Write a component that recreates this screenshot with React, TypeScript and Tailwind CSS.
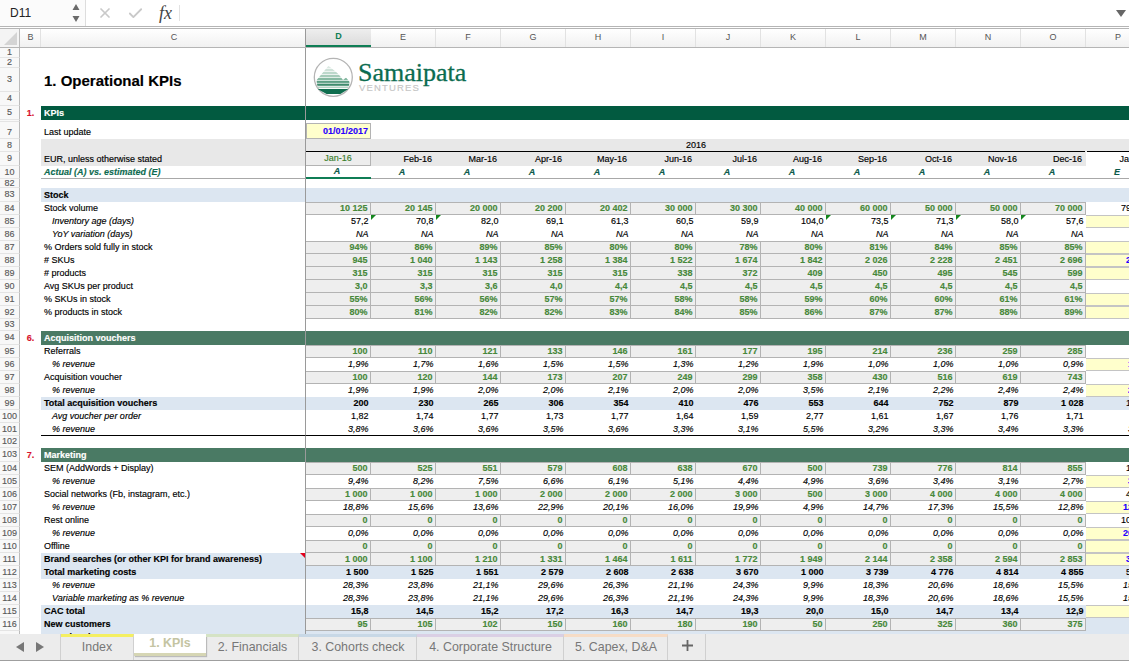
import type { ReactNode } from "react";
import { Check, X } from "lucide-react";

type Cell = "input" | "num" | "pct" | "total";
type Label = "plain" | "indent" | "bold";
type Side = { bg: "yellow" | "white" | "blue"; text?: string; style?: "ink" | "ital" | "bold" };

interface DataRow {
  n: number;
  label: string;
  lab: Label;
  cell: Cell;
  vals: string;
  p: Side;
  hints?: number[];
  flag?: boolean;
  rule?: boolean;
}

const COLS = ["D", "E", "F", "G", "H", "I", "J", "K", "L", "M", "N", "O", "P"];
const MONTHS = ["Feb", "Mar", "Apr", "May", "Jun", "Jul", "Aug", "Sep", "Oct", "Nov", "Dec"];

const CELL_STYLE: Record<Cell, string> = {
  input: "bg-[#eeeeee] text-[#47883a] font-bold border-r border-b border-[#b3b3b3]",
  num: "text-black",
  pct: "italic text-black",
  total: "bg-[#dce6f1] font-bold text-black",
};

const SIDE_BG = {
  yellow: "bg-[#ffffcc] border-y border-[#c4c4c4]",
  white: "bg-white",
  blue: "bg-[#dce6f1]",
};

const SIDE_TEXT = {
  ink: "text-black",
  ital: "italic text-black",
  bold: "font-bold text-[#2200ff]",
};

const yellow: Side = { bg: "yellow" };
const white: Side = { bg: "white" };

const STOCK: DataRow[] = [
  { n: 84, label: "Stock volume", lab: "plain", cell: "input", vals: "10 125|20 145|20 000|20 200|20 402|30 000|30 300|40 000|60 000|50 000|50 000|70 000", p: { bg: "white", text: "79 000", style: "ink" } },
  { n: 85, label: "Inventory age (days)", lab: "indent", cell: "num", vals: "57,2|70,8|82,0|69,1|61,3|60,5|59,9|104,0|73,5|71,3|58,0|57,6", p: yellow, hints: [1, 2, 8, 9, 10, 11] },
  { n: 86, label: "YoY variation (days)", lab: "indent", cell: "pct", vals: "NA|NA|NA|NA|NA|NA|NA|NA|NA|NA|NA|NA", p: white },
  { n: 87, label: "% Orders sold fully in stock", lab: "plain", cell: "input", vals: "94%|86%|89%|85%|80%|80%|78%|80%|81%|84%|85%|85%", p: yellow },
  { n: 88, label: "# SKUs", lab: "plain", cell: "input", vals: "945|1 040|1 143|1 258|1 384|1 522|1 674|1 842|2 026|2 228|2 451|2 696", p: { bg: "yellow", text: "2 966", style: "bold" } },
  { n: 89, label: "# products", lab: "plain", cell: "input", vals: "315|315|315|315|315|338|372|409|450|495|545|599", p: yellow },
  { n: 90, label: "Avg SKUs per product", lab: "plain", cell: "input", vals: "3,0|3,3|3,6|4,0|4,4|4,5|4,5|4,5|4,5|4,5|4,5|4,5", p: white },
  { n: 91, label: "% SKUs in stock", lab: "plain", cell: "input", vals: "55%|56%|56%|57%|57%|58%|58%|59%|60%|60%|61%|61%", p: yellow },
  { n: 92, label: "% products in stock", lab: "plain", cell: "input", vals: "80%|81%|82%|82%|83%|84%|85%|86%|87%|87%|88%|89%", p: yellow },
];

const VOUCHERS: DataRow[] = [
  { n: 95, label: "Referrals", lab: "plain", cell: "input", vals: "100|110|121|133|146|161|177|195|214|236|259|285", p: white },
  { n: 96, label: "% revenue", lab: "indent", cell: "pct", vals: "1,9%|1,7%|1,6%|1,5%|1,5%|1,3%|1,2%|1,9%|1,0%|1,0%|1,0%|0,9%", p: { bg: "yellow", text: "1,0%", style: "bold" } },
  { n: 97, label: "Acquisition voucher", lab: "plain", cell: "input", vals: "100|120|144|173|207|249|299|358|430|516|619|743", p: white },
  { n: 98, label: "% revenue", lab: "indent", cell: "pct", vals: "1,9%|1,9%|2,0%|2,0%|2,1%|2,0%|2,0%|3,5%|2,1%|2,2%|2,4%|2,4%", p: { bg: "yellow", text: "2,4%", style: "bold" } },
  { n: 99, label: "Total acquisition vouchers", lab: "bold", cell: "total", vals: "200|230|265|306|354|410|476|553|644|752|879|1 028", p: { bg: "blue", text: "1 200", style: "ink" } },
  { n: 100, label: "Avg voucher per order", lab: "indent", cell: "num", vals: "1,82|1,74|1,77|1,73|1,77|1,64|1,59|2,77|1,61|1,67|1,76|1,71", p: white },
  { n: 101, label: "% revenue", lab: "indent", cell: "pct", vals: "3,8%|3,6%|3,6%|3,5%|3,6%|3,3%|3,1%|5,5%|3,2%|3,3%|3,4%|3,3%", p: { bg: "white", text: "3,4%", style: "ital" }, rule: true },
];

const MARKETING: DataRow[] = [
  { n: 104, label: "SEM (AddWords + Display)", lab: "plain", cell: "input", vals: "500|525|551|579|608|638|670|500|739|776|814|855", p: { bg: "white", text: "1 000", style: "ink" } },
  { n: 105, label: "% revenue", lab: "indent", cell: "pct", vals: "9,4%|8,2%|7,5%|6,6%|6,1%|5,1%|4,4%|4,9%|3,6%|3,4%|3,1%|2,7%", p: { bg: "yellow", text: "3,0%", style: "bold" } },
  { n: 106, label: "Social networks (Fb, instagram, etc.)", lab: "plain", cell: "input", vals: "1 000|1 000|1 000|2 000|2 000|2 000|3 000|500|3 000|4 000|4 000|4 000", p: { bg: "white", text: "4 000", style: "ink" } },
  { n: 107, label: "% revenue", lab: "indent", cell: "pct", vals: "18,8%|15,6%|13,6%|22,9%|20,1%|16,0%|19,9%|4,9%|14,7%|17,3%|15,5%|12,8%", p: { bg: "yellow", text: "12,0%", style: "bold" } },
  { n: 108, label: "Rest online", lab: "plain", cell: "input", vals: "0|0|0|0|0|0|0|0|0|0|0|0", p: { bg: "white", text: "10 000", style: "ink" } },
  { n: 109, label: "% revenue", lab: "indent", cell: "pct", vals: "0,0%|0,0%|0,0%|0,0%|0,0%|0,0%|0,0%|0,0%|0,0%|0,0%|0,0%|0,0%", p: { bg: "yellow", text: "20,0%", style: "bold" } },
  { n: 110, label: "Offline", lab: "plain", cell: "input", vals: "0|0|0|0|0|0|0|0|0|0|0|0", p: yellow },
  { n: 111, label: "Brand searches (or other KPI for brand awareness)", lab: "bold", cell: "input", vals: "1 000|1 100|1 210|1 331|1 464|1 611|1 772|1 949|2 144|2 358|2 594|2 853", p: { bg: "yellow", text: "3 138", style: "bold" }, flag: true },
  { n: 112, label: "Total marketing costs", lab: "bold", cell: "total", vals: "1 500|1 525|1 551|2 579|2 608|2 638|3 670|1 000|3 739|4 776|4 814|4 855", p: { bg: "blue", text: "5 000", style: "ink" } },
  { n: 113, label: "% revenue", lab: "indent", cell: "pct", vals: "28,3%|23,8%|21,1%|29,6%|26,3%|21,1%|24,3%|9,9%|18,3%|20,6%|18,6%|15,5%", p: { bg: "white", text: "15,0%", style: "ital" } },
  { n: 114, label: "Variable marketing as % revenue", lab: "indent", cell: "pct", vals: "28,3%|23,8%|21,1%|29,6%|26,3%|21,1%|24,3%|9,9%|18,3%|20,6%|18,6%|15,5%", p: { bg: "white", text: "15,0%", style: "ital" } },
  { n: 115, label: "CAC total", lab: "bold", cell: "total", vals: "15,8|14,5|15,2|17,2|16,3|14,7|19,3|20,0|15,0|14,7|13,4|12,9", p: yellow },
  { n: 116, label: "New customers", lab: "bold", cell: "input", vals: "95|105|102|150|160|180|190|50|250|325|360|375", p: { bg: "blue" } },
  { n: 117, label: "Cumulated customers", lab: "bold", cell: "total", vals: "95|200|302|452|612|792|982|1 032|1 282|1 607|1 967|2 342", p: { bg: "blue", text: "2 700", style: "ink" } },
];

const TABS = [
  { name: "Index", width: "w-[73px]", top: "border-t-[#f4ef62]" },
  { name: "2. Financials", width: "w-[93px]", top: "border-t-[#d5e3c5]" },
  { name: "3. Cohorts check", width: "w-[118px]", top: "border-t-[#c8d8e6]" },
  { name: "4. Corporate Structure", width: "w-[147px]", top: "border-t-[#dacfe4]" },
  { name: "5. Capex, D&A", width: "w-[104px]", top: "border-t-[#f6dcc6]" },
];

function FormulaBar() {
  return (
    <div className="flex h-[27px] shrink-0 items-center border-b border-[#b5b5b5] bg-white">
      <div className="flex h-full w-[86px] shrink-0 items-center justify-between border-r border-[#dddddd] bg-[#fbfbfb] pl-[10px] pr-[5px] text-[12px] text-[#222222]">
        D11
        <svg width="8" height="20" viewBox="0 0 8 20" className="text-[#6a6a6a]">
          <path d="M4 1 7.5 7H.5zM4 19 .5 13h7z" fill="currentColor" />
        </svg>
      </div>
      <X className="ml-[11px] h-[16px] w-[16px] text-[#c9c9c9]" strokeWidth={2.6} />
      <Check className="ml-[14px] h-[17px] w-[17px] text-[#c9c9c9]" strokeWidth={2.6} />
      <span className="ml-[15px] font-['Liberation_Serif',serif] text-[18px] italic text-[#444444]">fx</span>
      <div className="ml-[7px] h-[16px] w-px bg-[#e2e2e2]" />
      <div className="flex-1" />
      <svg width="10" height="7" viewBox="0 0 10 7" className="mr-[3px] text-[#666666]">
        <path d="M0 0h10L5 7z" fill="currentColor" />
      </svg>
    </div>
  );
}

function ColumnHeader() {
  return (
    <div className="mt-px flex h-[20px] shrink-0 border-y border-[#b5b5b5] text-[9px] text-[#555555]">
      <div className="flex w-[20px] shrink-0 items-end justify-end border-r border-[#bbbbbb] bg-[#f4f4f4] pb-[2px] pr-[2px]">
        <svg width="13" height="13" viewBox="0 0 13 13">
          <path d="M13 0v13H0z" fill="#d4d4d4" />
        </svg>
      </div>
      <div className="flex w-[21px] shrink-0 items-center justify-center border-r border-[#e2e2e2] bg-gradient-to-b from-white to-[#f1f1f1] pl-px">B</div>
      <div className="flex w-[265px] shrink-0 items-center justify-center border-r border-[#9a9a9a] bg-gradient-to-b from-white to-[#f1f1f1] pl-[2px]">C</div>
      {COLS.map((col, i) => (
        <div
          key={col}
          className={
            i === 0
              ? "flex w-[65px] shrink-0 items-center justify-center border-b-2 border-[#0f7d55] bg-gradient-to-b from-[#eeeeee] to-[#dcdcdc] font-bold text-[#0f7d55]"
              : "flex w-[65px] shrink-0 items-center justify-center border-r border-[#e2e2e2] bg-gradient-to-b from-white to-[#f1f1f1]"
          }
        >
          {col}
        </div>
      ))}
    </div>
  );
}

// row number + the narrow column B that carries the red section numbers
function Gutter({ n, h, mark, low, children }: { n?: number; h: string; mark?: string; low?: boolean; children?: ReactNode }) {
  return (
    <div className={`flex shrink-0 ${h}`}>
      <div
        className={`flex w-[20px] shrink-0 justify-center border-b border-r border-b-[#e4e4e4] border-r-[#bbbbbb] bg-[#f8f8f8] text-[9px] leading-none text-[#5a5a5a] ${
          low ? "items-end pb-px" : "items-center"
        }`}
      >
        {n}
      </div>
      <div className="flex w-[21px] shrink-0 items-center justify-center text-[9px] font-bold leading-none text-[#d8112c]">{mark}</div>
      {children}
    </div>
  );
}

function CCell({ className = "", children }: { className?: string; children?: ReactNode }) {
  return (
    <div className={`relative flex w-[265px] shrink-0 items-center whitespace-nowrap border-r border-r-[#9a9a9a] pl-[3px] ${className}`}>
      {children}
    </div>
  );
}

function Section({ n, mark, title, dark }: { n: number; mark: string; title: string; dark?: boolean }) {
  const band = dark ? "bg-[#025a40]" : "bg-[#4a7a64]";
  return (
    <Gutter n={n} h="h-[14px]" mark={mark}>
      <CCell className={`${band} font-bold text-white`}>{title}</CCell>
      <div className={`flex-1 ${band}`} />
    </Gutter>
  );
}

function Blank({ n, h }: { n?: number; h: string }) {
  return (
    <Gutter n={n} h={h}>
      <CCell />
    </Gutter>
  );
}

function Rows({ rows }: { rows: DataRow[] }) {
  return (
    <>
      {rows.map((row, idx) => {
        const topLine = row.cell === "input" && rows[idx - 1]?.cell !== "input";
        const labelClass =
          row.lab === "bold"
            ? "bg-[#dce6f1] font-bold"
            : row.lab === "indent"
              ? "pl-[11px] italic"
              : "";
        const ruled = row.rule ? "border-b border-b-black" : "";
        return (
          <Gutter key={row.n} n={row.n} h="h-[13px]">
            <CCell className={`${labelClass} ${ruled} text-black`}>
              {row.label}
              {row.flag && (
                <svg width="5" height="5" viewBox="0 0 5 5" className="absolute right-0 top-0">
                  <path d="M0 0h5v5z" fill="#e3001b" />
                </svg>
              )}
            </CCell>
            {row.vals.split("|").map((val, i) => (
              <div
                key={i}
                className={`relative flex w-[65px] shrink-0 items-center justify-end pr-[2.5px] ${CELL_STYLE[row.cell]} ${ruled} ${topLine ? "border-t" : ""}`}
              >
                {row.hints?.includes(i) && (
                  <svg width="5" height="5" viewBox="0 0 5 5" className="absolute left-0 top-0">
                    <path d="M0 0h5L0 5z" fill="#14861e" />
                  </svg>
                )}
                {val}
              </div>
            ))}
            <div
              className={`flex w-[65px] shrink-0 items-center justify-end pr-[2.5px] ${SIDE_BG[row.p.bg]} ${row.p.style ? SIDE_TEXT[row.p.style] : ""} ${ruled}`}
            >
              {row.p.text}
            </div>
          </Gutter>
        );
      })}
    </>
  );
}

function Logo() {
  return (
    <>
      <svg width="41" height="41" viewBox="0 0 41 41" className="absolute left-[7px] top-[-11px]">
        <defs>
          <clipPath id="ridge">
            <path d="M3.7 23 15.3 9l1.7 1 7 5.7 3 3.3 3 4 3-2.4 3.3 4 .2 1.6-1.5 6-8 5H14l-9-5-1.3-7z" />
          </clipPath>
        </defs>
        <circle cx="20.3" cy="20.3" r="19" fill="white" stroke="#b4b4b4" strokeWidth="1.3" />
        <g clipPath="url(#ridge)">
          <rect x="0" y="8" width="41" height="3" fill="#dbe9e2" />
          <rect x="0" y="11.7" width="41" height="2.4" fill="#cfe2d9" />
          <rect x="0" y="14.8" width="41" height="2.4" fill="#bcd8cb" />
          <rect x="0" y="17.9" width="41" height="2.2" fill="#a5cbb9" />
          <rect x="0" y="20.8" width="41" height="2.2" fill="#86b9a2" />
          <rect x="0" y="23.7" width="41" height="2.2" fill="#5d9f84" />
          <rect x="0" y="26.6" width="41" height="2.2" fill="#3f8b6d" />
          <rect x="0" y="29.5" width="41" height="1.6" fill="#b5d3c5" />
          <rect x="0" y="32" width="41" height="5" fill="#0f6e4f" />
        </g>
      </svg>
      <span className="absolute left-[52px] top-[-8px] font-['Liberation_Serif',serif] text-[26px] leading-none text-[#0b6c50] [-webkit-text-stroke:0.3px_#0b6c50]">
        Samaipata
      </span>
      <span className="absolute left-[53px] top-[15px] text-[9.5px] leading-none tracking-[1.15px] text-[#c6c6c6]">
        VENTURES
      </span>
    </>
  );
}

function TabBar() {
  return (
    <div className="flex h-[27px] shrink-0 border-b border-[#9f9f9f] bg-[#ececec] text-[12.4px] text-[#777777]">
      <div className="flex w-[61px] shrink-0 items-center justify-center gap-[12px] border-r border-[#d0d0d0]">
        <svg width="8" height="10" viewBox="0 0 8 10" className="text-[#777777]">
          <path d="M8 0v10L0 5z" fill="currentColor" />
        </svg>
        <svg width="8" height="10" viewBox="0 0 8 10" className="text-[#777777]">
          <path d="M0 0v10l8-5z" fill="currentColor" />
        </svg>
      </div>
      <div className={`flex ${TABS[0].width} shrink-0 items-center justify-center border-r border-t-[3px] border-r-[#d0d0d0] ${TABS[0].top} pb-[3px]`}>
        {TABS[0].name}
      </div>
      <div className="flex h-[22px] w-[72px] shrink-0 items-center justify-center border-b-[3px] border-[#d6d6b4] bg-white font-bold text-[#c4c4a2] shadow-[1px_1px_1px_#bbbbbb]">
        1. KPIs
      </div>
      {TABS.slice(1).map((tab) => (
        <div
          key={tab.name}
          className={`flex ${tab.width} shrink-0 items-center justify-center border-r border-t-[3px] border-r-[#d0d0d0] pl-px ${tab.top} pb-[3px]`}
        >
          {tab.name}
        </div>
      ))}
      <div className="flex w-[38px] shrink-0 items-center justify-center border-r border-[#d0d0d0] pb-[3px] pl-px text-[#666666]">
        <svg width="11" height="11" viewBox="0 0 11 11">
          <path d="M5.5 0v11M0 5.5h11" stroke="currentColor" strokeWidth="1.8" />
        </svg>
      </div>
    </div>
  );
}

export default function App() {
  return (
    <div className="flex h-[661px] w-[1129px] flex-col overflow-hidden bg-white font-['Liberation_Sans',Arial,sans-serif]">
      <FormulaBar />
      <ColumnHeader />
      <div className="min-h-0 flex-1 overflow-hidden text-[9px] leading-none text-black [-webkit-text-stroke:0.15px_currentColor]">
        <Blank n={1} h="h-[10px]" />
        <Blank n={2} h="h-[10px]" />
        <Gutter n={3} h="h-[24px]">
          <CCell className="text-[15px] font-bold text-black">1. Operational KPIs</CCell>
          <div className="relative w-[65px] shrink-0">
            <Logo />
          </div>
        </Gutter>
        <Blank n={4} h="h-[14px]" />
        <Section n={5} mark="1." title="KPIs" dark />
        <Blank h="h-[2px]" />
        <Gutter n={7} h="h-[17px]" low>
          <CCell className="pt-[3px]">Last update</CCell>
          <div className="mt-px flex w-[65px] shrink-0 items-center justify-end border border-[#b3b3b3] bg-[#ffffcc] pr-[2px] font-bold text-[#2a00ff]">
            01/01/2017
          </div>
        </Gutter>
        <Gutter n={8} h="h-[13px]" low>
          <CCell className="bg-[#e8e8e8]" />
          <div className="flex w-[779px] shrink-0 items-center justify-center border-b border-b-black bg-[#e8e8e8] pl-px">2016</div>
          <div className="w-[2px] shrink-0 bg-[#e8e8e8]" />
          <div className="flex-1 border-b border-b-black bg-[#e8e8e8]" />
        </Gutter>
        <Gutter n={9} h="h-[14px]">
          <CCell className="bg-[#e8e8e8]">EUR, unless otherwise stated</CCell>
          <div className="flex w-[65px] shrink-0 items-center justify-center border-b border-r border-[#b3b3b3] bg-[#ededed] text-[#3a7d2c]">Jan-16</div>
          {MONTHS.map((m) => (
            <div key={m} className="flex w-[65px] shrink-0 items-center justify-end bg-[#e8e8e8] pr-[4px]">
              {m}-16
            </div>
          ))}
          <div className="flex w-[65px] shrink-0 items-center justify-end pr-[4px]">Jan-17</div>
        </Gutter>
        <Gutter n={10} h="h-[13px]">
          <CCell className="border-b border-b-[#a8a8a8] font-bold italic text-[#0e6b50]">Actual (A) vs. estimated (E)</CCell>
          {COLS.map((col, i) => (
            <div
              key={col}
              className={
                i === 0
                  ? "flex w-[65px] shrink-0 items-center justify-center border-b-2 border-[#0f7d55] pr-[3px] font-bold italic text-[#0b5a4a]"
                  : "flex w-[65px] shrink-0 items-center justify-center border-b border-[#a8a8a8] pr-[3px] font-bold italic text-[#0b5a4a]"
              }
            >
              {i === 12 ? "E" : "A"}
            </div>
          ))}
        </Gutter>
        <Blank n={82} h="h-[9px]" />
        <Gutter n={83} h="h-[14px]">
          <CCell className="bg-[#dce6f1] font-bold">Stock</CCell>
          <div className="flex-1 bg-[#dce6f1]" />
        </Gutter>
        <Rows rows={STOCK} />
        <Blank n={93} h="h-[12px]" />
        <Section n={94} mark="6." title="Acquisition vouchers" />
        <Rows rows={VOUCHERS} />
        <Blank n={102} h="h-[12px]" />
        <Section n={103} mark="7." title="Marketing" />
        <Rows rows={MARKETING} />
      </div>
      <TabBar />
    </div>
  );
}
